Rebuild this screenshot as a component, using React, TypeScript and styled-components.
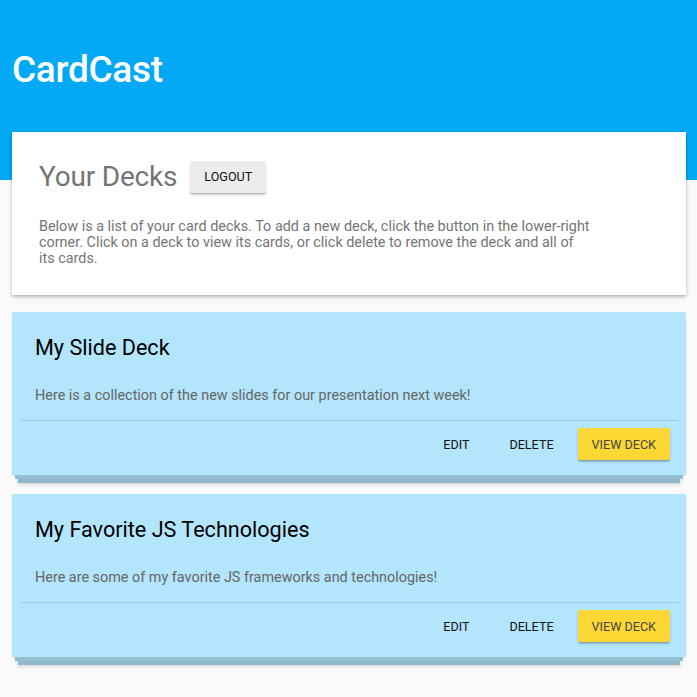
import styled, { createGlobalStyle } from 'styled-components';

// Type Declarations
type Deck = {
  title: string;
  description: string;
};

const decks: Deck[] = [
  {
    title: 'My Slide Deck',
    description:
      'Here is a collection of the new slides for our presentation next week!',
  },
  {
    title: 'My Favorite JS Technologies',
    description: 'Here are some of my favorite JS frameworks and technologies!',
  },
];

// Global Styles
const GlobalStyle = createGlobalStyle`
  html, body {
    margin: 0;
    padding: 0;
    background: #fafafa;
    font-family: Roboto, "Liberation Sans", Arial, sans-serif;
  }
  * {
    box-sizing: border-box;
  }
`;

// Header CSS Element
const Header = styled.header`
  height: 180px;
  background: #03a9f4;
  padding: 0 12px;
  display: flex;
  align-items: flex-start;
`;

const Brand = styled.h1`
  margin: 0;
  padding-top: 48px;
  color: #fff;
  font-size: 37px;
  font-weight: 500;
  letter-spacing: -0.3px;
  line-height: 43px;
`;

// Main CSS Element
const Main = styled.main`
  margin-top: -48px;
  padding: 0 11px 0 12px;
  display: flex;
  flex-direction: column;
`;

// Intro Panel CSS Elements
const Panel = styled.section`
  background: #fff;
  padding: 28px 27px 28px 27px;
  margin-bottom: 17px;
  box-shadow: 0 2px 4px rgba(0, 0, 0, 0.22), 0 1px 2px rgba(0, 0, 0, 0.12);
`;

const PanelHead = styled.div`
  display: flex;
  align-items: center;
  gap: 13px;
`;

const PanelTitle = styled.h2`
  margin: 0;
  font-size: 28px;
  font-weight: 400;
  color: #757575;
  letter-spacing: -0.2px;
`;

const PanelText = styled.p`
  margin: 26px 0 0;
  max-width: 552px;
  font-size: 14.4px;
  line-height: 16px;
  color: #757575;
`;

// Button CSS Element
const Button = styled.button<{ $variant?: 'flat' | 'raised' | 'accent' }>`
  border: none;
  border-radius: 2px;
  font-family: inherit;
  font-size: 12.6px;
  font-weight: 400;
  text-transform: uppercase;
  height: 32px;
  padding: 0 ${(p) => (p.$variant === 'flat' ? '16px' : '14px')};
  cursor: pointer;
  color: ${(p) => (p.$variant === 'accent' ? '#444' : '#111')};
  background: ${(p) =>
    p.$variant === 'accent'
      ? '#fdd835'
      : p.$variant === 'raised'
        ? '#ececec'
        : 'transparent'};
  box-shadow: ${(p) =>
    p.$variant === 'flat'
      ? 'none'
      : '0 2px 2px rgba(0, 0, 0, 0.2), 0 1px 1px rgba(0, 0, 0, 0.12)'};
`;

// Deck Card CSS Elements
const Card = styled.article`
  background: #b3e5fc;
  border-radius: 2px;
  padding: 0 8px 15px 9px;
  margin-bottom: 19px;
  box-shadow: 0 7px 0 -3px #93bdd1, 0 1px 2px rgba(0, 0, 0, 0.15),
    0 14px 0 -6px #8fb8cc, 0 15px 3px -5px rgba(0, 0, 0, 0.12);
`;

const CardBody = styled.div`
  padding: 21px 14px 0;
  border-bottom: 1px solid #93cde6;
  height: 109px;
`;

const CardTitle = styled.h3`
  margin: 0;
  font-size: 21.6px;
  font-weight: 400;
  color: #000;
  line-height: 30px;
`;

const CardText = styled.p`
  margin: 25px 0 0;
  font-size: 14.4px;
  line-height: 16px;
  color: #666;
`;

const CardActions = styled.div`
  display: flex;
  justify-content: flex-end;
  gap: 8px;
  padding: 7px 8px 0 0;
`;

// App React Component
const App = () => {
  return (
    <>
      <GlobalStyle />
      <Header>
        <Brand>CardCast</Brand>
      </Header>
      <Main>
        <Panel>
          <PanelHead>
            <PanelTitle>Your Decks</PanelTitle>
            <Button $variant="raised">Logout</Button>
          </PanelHead>
          <PanelText>
            Below is a list of your card decks. To add a new deck, click the
            button in the lower-right corner. Click on a deck to view its cards,
            or click delete to remove the deck and all of its cards.
          </PanelText>
        </Panel>
        {decks.map((deck) => (
          <Card key={deck.title}>
            <CardBody>
              <CardTitle>{deck.title}</CardTitle>
              <CardText>{deck.description}</CardText>
            </CardBody>
            <CardActions>
              <Button $variant="flat">Edit</Button>
              <Button $variant="flat">Delete</Button>
              <Button $variant="accent">View Deck</Button>
            </CardActions>
          </Card>
        ))}
      </Main>
    </>
  );
};

export default App;
